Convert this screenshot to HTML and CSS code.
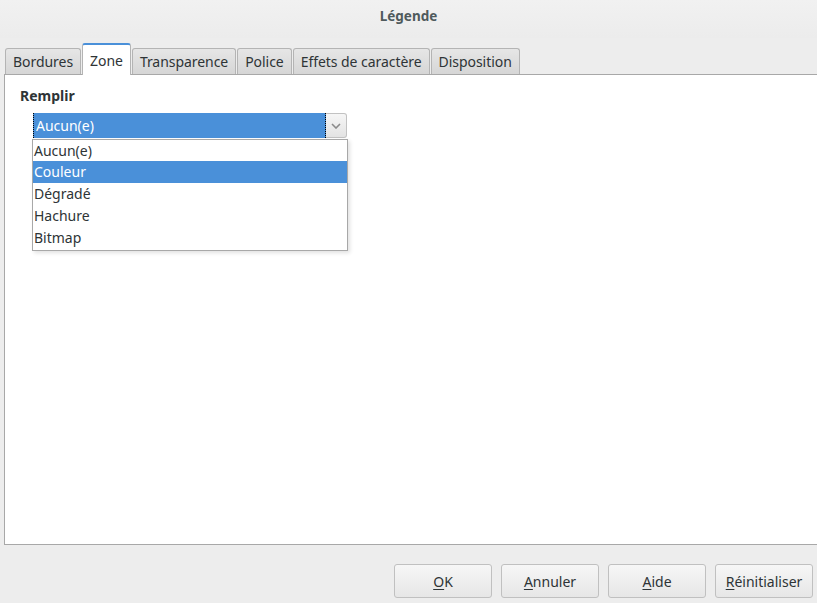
FILE: index.html
```html
<!DOCTYPE html>
<html lang="fr">
<head>
<meta charset="utf-8">
<title>Légende</title>
<link rel="stylesheet" href="styles.css">
</head>
<body>
<div class="dialog">
  <header class="titlebar">Légende</header>
  <div class="notebook">
    <div class="tabs">
      <div class="tab">Bordures</div>
      <div class="tab active">Zone</div>
      <div class="tab">Transparence</div>
      <div class="tab">Police</div>
      <div class="tab">Effets de caractère</div>
      <div class="tab">Disposition</div>
    </div>
    <div class="panel">
      <div class="section-label">Remplir</div>
      <div class="combo-wrap">
        <div class="combo">
          <div class="combo-value">Aucun(e)</div>
          <div class="combo-btn">
            <svg width="10" height="6" viewBox="0 0 10 6"><path d="M1 1 L5 5 L9 1" fill="none" stroke="#8a8a8a" stroke-width="1.6"/></svg>
          </div>
        </div>
        <ul class="popup">
          <li>Aucun(e)</li>
          <li class="hl">Couleur</li>
          <li>Dégradé</li>
          <li>Hachure</li>
          <li>Bitmap</li>
        </ul>
      </div>
    </div>
  </div>
  <footer class="buttons">
    <button class="btn"><u>O</u>K</button>
    <button class="btn"><u>A</u>nnuler</button>
    <button class="btn"><u>A</u>ide</button>
    <button class="btn"><u>R</u>éinitialiser</button>
  </footer>
</div>
</body>
</html>
```
FILE: styles.css
```css
html, body {
  margin: 0;
  padding: 0;
}
body {
  width: 817px;
  height: 603px;
  overflow: hidden;
  background: #ededed;
  font-family: "Noto Sans", "DejaVu Sans", sans-serif;
  font-size: 14px;
  color: #2e3436;
}
.dialog {
  display: flex;
  flex-direction: column;
  height: 603px;
}
.titlebar {
  height: 38px;
  line-height: 32px;
  text-align: center;
  font-weight: bold;
  font-size: 13.5px;
  color: #4f5a5c;
  background: linear-gradient(#f1f1f1, #ececec);
  flex: none;
}
.notebook {
  margin: 5px 0 0 4px;
  display: flex;
  flex-direction: column;
}
.tabs {
  display: flex;
  align-items: flex-end;
  padding-left: 1px;
  gap: 1px;
  height: 31px;
  position: relative;
  z-index: 1;
}
.tab {
  height: 25px;
  line-height: 25px;
  padding: 0 7px;
  background: linear-gradient(#e6e6e6, #d6d6d6);
  border: 1px solid #b4b4b4;
  border-bottom: none;
  border-radius: 3px 3px 0 0;
  color: #2e3436;
  letter-spacing: -0.05px;
}
.tab.active {
  height: 30px;
  line-height: 32px;
  background: #fff;
  margin-bottom: -1px;
  border-color: #b4b4b4;
  border-top: 2px solid #4a90d9;
}
.panel {
  background: #fff;
  border: 1px solid #a8a8a8;
  border-right: none;
  height: 471px;
  padding: 11px 0 0 15px;
  box-sizing: border-box;
}
.section-label {
  font-weight: bold;
  line-height: 20px;
  color: #2e3436;
}
.combo-wrap {
  position: relative;
  margin: 7px 0 0 13px;
  width: 314px;
}
.combo {
  display: flex;
  height: 25px;
  box-sizing: border-box;
}
.combo-value {
  flex: 1;
  background: #4a90d9;
  color: #fff;
  line-height: 25px;
  padding-left: 2px;
  border-left: 1px dotted #000;
  border-right: 1px dotted #000;
}
.combo-btn {
  width: 21px;
  border: 1px solid #c2c2c2;
  border-left: none;
  border-radius: 0 3px 3px 0;
  background: linear-gradient(#f6f6f6, #e3e3e3);
  display: flex;
  align-items: center;
  justify-content: center;
  box-sizing: border-box;
}
.popup {
  position: absolute;
  left: -1px;
  top: 26px;
  width: 314px;
  margin: 0;
  padding: 0 0 1px 0;
  list-style: none;
  background: #fff;
  border: 1px solid #a8a8a8;
  box-shadow: 2px 2px 4px rgba(0,0,0,0.12);
}
.popup li {
  height: 22px;
  line-height: 22px;
  padding-left: 1px;
  color: #2e3436;
}
.popup li:first-child {
  height: 21px;
}
.popup li.hl {
  background: #4a90d9;
  color: #fff;
}
.buttons {
  display: flex;
  justify-content: flex-end;
  gap: 9px;
  padding: 19px 4px 0 0;
}
.btn {
  width: 98px;
  height: 34px;
  font: inherit;
  color: #2e3436;
  border: 1px solid #c0c0c0;
  border-radius: 3px;
  background: linear-gradient(#f6f6f6, #e6e6e6);
  padding: 0;
}
.btn u {
  text-underline-offset: 2px;
}
```
